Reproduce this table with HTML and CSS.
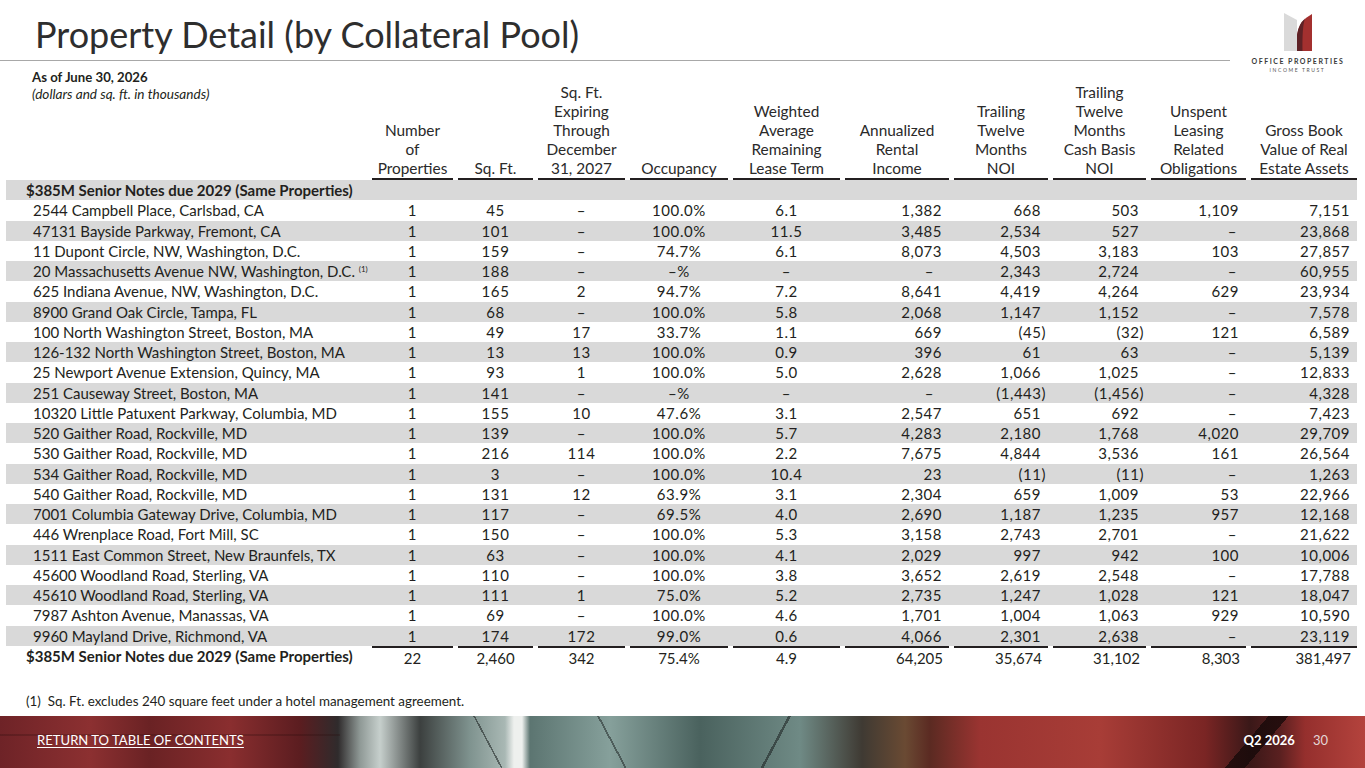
FILE: index.html
```html
<!DOCTYPE html>
<html lang="en">
<head>
<meta charset="utf-8">
<title>Property Detail (by Collateral Pool)</title>
<link rel="stylesheet" href="styles.css">
</head>
<body>
<div class="page">
  <header class="top">
    <div class="title-wrap">
      <h1 class="title">Property Detail (by Collateral Pool)</h1>
    </div>
    <div class="logo">
      <svg class="logo-mark" viewBox="0 0 28 38" width="28" height="38" aria-hidden="true">
        <path d="M0 0 L13 7 L13 38 L0 38 Z" fill="#dadada"/>
        <path d="M13 38 L13 22 Q14.5 8 28 1 L28 38 Z" fill="#a3302f"/>
        <path d="M13 38 L13 22 Q14.5 11 21 5.5 Q18 14 18.5 38 Z" fill="#5e2226"/>
      </svg>
      <div class="logo-name">OFFICE PROPERTIES</div>
      <div class="logo-sub">INCOME TRUST</div>
    </div>
  </header>

  <table class="grid">
    <colgroup>
      <col class="w-name"><col class="w-num"><col class="w-sq"><col class="w-exp"><col class="w-occ"><col class="w-walt">
      <col class="w-ari"><col class="w-noi"><col class="w-cash"><col class="w-uns"><col class="w-gross">
    </colgroup>
    <thead>
      <tr class="hrow">
        <th class="h-name">
          <div class="asof">As of June 30, 2026</div>
          <div class="units">(dollars and sq. ft. in thousands)</div>
        </th>
        <th><div class="hd">Number<br>of<br>Properties</div></th>
        <th><div class="hd">Sq. Ft.</div></th>
        <th><div class="hd">Sq. Ft.<br>Expiring<br>Through<br>December<br>31, 2027</div></th>
        <th><div class="hd">Occupancy</div></th>
        <th><div class="hd">Weighted<br>Average<br>Remaining<br>Lease Term</div></th>
        <th><div class="hd">Annualized<br>Rental<br>Income</div></th>
        <th><div class="hd">Trailing<br>Twelve<br>Months<br>NOI</div></th>
        <th><div class="hd">Trailing<br>Twelve<br>Months<br>Cash Basis<br>NOI</div></th>
        <th><div class="hd">Unspent<br>Leasing<br>Related<br>Obligations</div></th>
        <th><div class="hd">Gross Book<br>Value of Real<br>Estate Assets</div></th>
      </tr>
    </thead>
    <tbody>
      <tr class="group"><td class="g-name" colspan="11">$385M Senior Notes due 2029 (Same Properties)</td></tr>
      <tr><td class="nm">2544 Campbell Place, Carlsbad, CA</td><td class="c">1</td><td class="c">45</td><td class="c">–</td><td class="c">100.0%</td><td class="c">6.1</td><td class="r">1,382</td><td class="r">668</td><td class="r">503</td><td class="r">1,109</td><td class="r">7,151</td></tr>
      <tr><td class="nm">47131 Bayside Parkway, Fremont, CA</td><td class="c">1</td><td class="c">101</td><td class="c">–</td><td class="c">100.0%</td><td class="c">11.5</td><td class="r">3,485</td><td class="r">2,534</td><td class="r">527</td><td class="r"><span class="dash">–</span></td><td class="r">23,868</td></tr>
      <tr><td class="nm">11 Dupont Circle, NW, Washington, D.C.</td><td class="c">1</td><td class="c">159</td><td class="c">–</td><td class="c">74.7%</td><td class="c">6.1</td><td class="r">8,073</td><td class="r">4,503</td><td class="r">3,183</td><td class="r">103</td><td class="r">27,857</td></tr>
      <tr><td class="nm">20 Massachusetts Avenue NW, Washington, D.C. <sup class="fn">(1)</sup></td><td class="c">1</td><td class="c">188</td><td class="c">–</td><td class="c">–%</td><td class="c">–</td><td class="r"><span class="dash dash-w">–</span></td><td class="r">2,343</td><td class="r">2,724</td><td class="r"><span class="dash">–</span></td><td class="r">60,955</td></tr>
      <tr><td class="nm">625 Indiana Avenue, NW, Washington, D.C.</td><td class="c">1</td><td class="c">165</td><td class="c">2</td><td class="c">94.7%</td><td class="c">7.2</td><td class="r">8,641</td><td class="r">4,419</td><td class="r">4,264</td><td class="r">629</td><td class="r">23,934</td></tr>
      <tr><td class="nm">8900 Grand Oak Circle, Tampa, FL</td><td class="c">1</td><td class="c">68</td><td class="c">–</td><td class="c">100.0%</td><td class="c">5.8</td><td class="r">2,068</td><td class="r">1,147</td><td class="r">1,152</td><td class="r"><span class="dash">–</span></td><td class="r">7,578</td></tr>
      <tr><td class="nm">100 North Washington Street, Boston, MA</td><td class="c">1</td><td class="c">49</td><td class="c">17</td><td class="c">33.7%</td><td class="c">1.1</td><td class="r">669</td><td class="r">(45<span class="rp">)</span></td><td class="r">(32<span class="rp">)</span></td><td class="r">121</td><td class="r">6,589</td></tr>
      <tr><td class="nm">126-132 North Washington Street, Boston, MA</td><td class="c">1</td><td class="c">13</td><td class="c">13</td><td class="c">100.0%</td><td class="c">0.9</td><td class="r">396</td><td class="r">61</td><td class="r">63</td><td class="r"><span class="dash">–</span></td><td class="r">5,139</td></tr>
      <tr><td class="nm">25 Newport Avenue Extension, Quincy, MA</td><td class="c">1</td><td class="c">93</td><td class="c">1</td><td class="c">100.0%</td><td class="c">5.0</td><td class="r">2,628</td><td class="r">1,066</td><td class="r">1,025</td><td class="r"><span class="dash">–</span></td><td class="r">12,833</td></tr>
      <tr><td class="nm">251 Causeway Street, Boston, MA</td><td class="c">1</td><td class="c">141</td><td class="c">–</td><td class="c">–%</td><td class="c">–</td><td class="r"><span class="dash dash-w">–</span></td><td class="r">(1,443<span class="rp">)</span></td><td class="r">(1,456<span class="rp">)</span></td><td class="r"><span class="dash">–</span></td><td class="r">4,328</td></tr>
      <tr><td class="nm">10320 Little Patuxent Parkway, Columbia, MD</td><td class="c">1</td><td class="c">155</td><td class="c">10</td><td class="c">47.6%</td><td class="c">3.1</td><td class="r">2,547</td><td class="r">651</td><td class="r">692</td><td class="r"><span class="dash">–</span></td><td class="r">7,423</td></tr>
      <tr><td class="nm">520 Gaither Road, Rockville, MD</td><td class="c">1</td><td class="c">139</td><td class="c">–</td><td class="c">100.0%</td><td class="c">5.7</td><td class="r">4,283</td><td class="r">2,180</td><td class="r">1,768</td><td class="r">4,020</td><td class="r">29,709</td></tr>
      <tr><td class="nm">530 Gaither Road, Rockville, MD</td><td class="c">1</td><td class="c">216</td><td class="c">114</td><td class="c">100.0%</td><td class="c">2.2</td><td class="r">7,675</td><td class="r">4,844</td><td class="r">3,536</td><td class="r">161</td><td class="r">26,564</td></tr>
      <tr><td class="nm">534 Gaither Road, Rockville, MD</td><td class="c">1</td><td class="c">3</td><td class="c">–</td><td class="c">100.0%</td><td class="c">10.4</td><td class="r">23</td><td class="r">(11<span class="rp">)</span></td><td class="r">(11<span class="rp">)</span></td><td class="r"><span class="dash">–</span></td><td class="r">1,263</td></tr>
      <tr><td class="nm">540 Gaither Road, Rockville, MD</td><td class="c">1</td><td class="c">131</td><td class="c">12</td><td class="c">63.9%</td><td class="c">3.1</td><td class="r">2,304</td><td class="r">659</td><td class="r">1,009</td><td class="r">53</td><td class="r">22,966</td></tr>
      <tr><td class="nm">7001 Columbia Gateway Drive, Columbia, MD</td><td class="c">1</td><td class="c">117</td><td class="c">–</td><td class="c">69.5%</td><td class="c">4.0</td><td class="r">2,690</td><td class="r">1,187</td><td class="r">1,235</td><td class="r">957</td><td class="r">12,168</td></tr>
      <tr><td class="nm">446 Wrenplace Road, Fort Mill, SC</td><td class="c">1</td><td class="c">150</td><td class="c">–</td><td class="c">100.0%</td><td class="c">5.3</td><td class="r">3,158</td><td class="r">2,743</td><td class="r">2,701</td><td class="r"><span class="dash">–</span></td><td class="r">21,622</td></tr>
      <tr><td class="nm">1511 East Common Street, New Braunfels, TX</td><td class="c">1</td><td class="c">63</td><td class="c">–</td><td class="c">100.0%</td><td class="c">4.1</td><td class="r">2,029</td><td class="r">997</td><td class="r">942</td><td class="r">100</td><td class="r">10,006</td></tr>
      <tr><td class="nm">45600 Woodland Road, Sterling, VA</td><td class="c">1</td><td class="c">110</td><td class="c">–</td><td class="c">100.0%</td><td class="c">3.8</td><td class="r">3,652</td><td class="r">2,619</td><td class="r">2,548</td><td class="r"><span class="dash">–</span></td><td class="r">17,788</td></tr>
      <tr><td class="nm">45610 Woodland Road, Sterling, VA</td><td class="c">1</td><td class="c">111</td><td class="c">1</td><td class="c">75.0%</td><td class="c">5.2</td><td class="r">2,735</td><td class="r">1,247</td><td class="r">1,028</td><td class="r">121</td><td class="r">18,047</td></tr>
      <tr><td class="nm">7987 Ashton Avenue, Manassas, VA</td><td class="c">1</td><td class="c">69</td><td class="c">–</td><td class="c">100.0%</td><td class="c">4.6</td><td class="r">1,701</td><td class="r">1,004</td><td class="r">1,063</td><td class="r">929</td><td class="r">10,590</td></tr>
      <tr><td class="nm">9960 Mayland Drive, Richmond, VA</td><td class="c">1</td><td class="c">174</td><td class="c">172</td><td class="c">99.0%</td><td class="c">0.6</td><td class="r">4,066</td><td class="r">2,301</td><td class="r">2,638</td><td class="r"><span class="dash">–</span></td><td class="r">23,119</td></tr>
    </tbody>
    <tfoot>
      <tr class="total">
        <td class="t-name">$385M Senior Notes due 2029 (Same Properties)</td>
        <td class="tc"><div class="tv">22</div></td>
        <td class="tc"><div class="tv">2,460</div></td>
        <td class="tc"><div class="tv">342</div></td>
        <td class="tc"><div class="tv">75.4%</div></td>
        <td class="tc"><div class="tv">4.9</div></td>
        <td class="tr"><div class="tv">64,205</div></td>
        <td class="tr"><div class="tv">35,674</div></td>
        <td class="tr"><div class="tv">31,102</div></td>
        <td class="tr"><div class="tv">8,303</div></td>
        <td class="tr"><div class="tv">381,497</div></td>
      </tr>
    </tfoot>
  </table>

  <p class="footnote">(1)&nbsp; Sq. Ft. excludes 240 square feet under a hotel management agreement.</p>

  <footer class="foot">
    <a class="toc" href="#">RETURN TO TABLE OF CONTENTS</a>
    <div class="pg"><span class="q">Q2 2026</span><span class="num">30</span></div>
  </footer>
</div>
</body>
</html>
```

FILE: styles.css
```css
* { box-sizing: border-box; }

html, body {
  margin: 0;
  padding: 0;
  background: #ffffff;
}

body {
  font-family: Lato, "Open Sans", "Liberation Sans", sans-serif;
  color: #231f20;
}

.page {
  width: 1365px;
  height: 768px;
  display: flex;
  flex-direction: column;
  overflow: hidden;
}

/* ---------- header ---------- */
.top {
  display: flex;
  height: 61px;
  flex: none;
}

.title-wrap {
  flex: 1;
  padding-left: 35px;
  border-bottom: 1px solid #a8a8a8;
}

.title {
  margin: 0;
  padding-top: 11px;
  font-size: 36px;
  line-height: 46px;
  font-weight: 400;
  color: #2e2e2e;
}

.logo {
  width: 135px;
  display: flex;
  flex-direction: column;
  align-items: center;
  padding-top: 13px;
  position: relative;
  z-index: 1;
}

.logo > * { flex: none; }

.logo-mark {
  display: block;
}

.logo-name {
  margin-top: 6px;
  font-size: 7px;
  line-height: 9px;
  font-weight: 700;
  letter-spacing: 1.5px;
  color: #3a3a3a;
  white-space: nowrap;
  padding-left: 1px;
}

.logo-sub {
  margin-top: 1px;
  font-size: 5px;
  line-height: 7px;
  letter-spacing: 1.6px;
  color: #555;
  white-space: nowrap;
}

/* ---------- table ---------- */
.grid {
  margin: 8px 0 0 6px;
  width: 1351px;
  border-collapse: collapse;
  table-layout: fixed;
  font-size: 15px;
  flex: none;
}

.w-name { width: 361px; }
.w-num { width: 86px; }
.w-sq { width: 80px; }
.w-exp { width: 92px; }
.w-occ { width: 103px; }
.w-walt { width: 112px; }
.w-ari { width: 109px; }
.w-noi { width: 99px; }
.w-cash { width: 98px; }
.w-uns { width: 100px; }
.w-gross { width: 111px; }

.hrow th {
  height: 111px;
  padding: 0 0 0 5px;
  vertical-align: bottom;
  font-weight: 400;
}

.hrow th.h-name {
  vertical-align: top;
  text-align: left;
  padding: 0 0 0 26px;
}

.asof {
  font-weight: 700;
  font-size: 13.2px;
  line-height: 17px;
}

.units {
  font-style: italic;
  font-size: 13.6px;
  line-height: 17px;
}

.hd {
  text-align: center;
  line-height: 19px;
  border-bottom: 2px solid #231f20;
  color: #2a2a2a;
  white-space: nowrap;
  font-size: 15.4px;
}

.grid td {
  padding: 0;
  height: 20.25px;
  line-height: 20px;
  white-space: nowrap;
}

.group td {
  background: #d9d9d9;
  font-weight: 700;
  padding-left: 20px;
}

tbody tr:nth-child(odd):not(.group) td {
  background: #d9d9d9;
}

.nm { padding-left: 27px !important; }

.c {
  text-align: center;
  padding-left: 5px !important;
  letter-spacing: 0.6px;
}

.r {
  text-align: right;
  padding-right: 7px !important;
  letter-spacing: 0.5px;
}

.rp { margin-right: -5px; }

.dash { margin-right: 2px; }
.dash-w { margin-right: 8px; }

.fn {
  font-size: 8px;
  line-height: 0;
  vertical-align: 0;
  position: relative;
  top: -5px;
}

/* totals */
.total td {
  height: 23px;
  padding: 0;
  vertical-align: top;
}

.t-name {
  font-weight: 700;
  padding-left: 20px !important;
  line-height: 23px;
}

.total .tc, .total .tr { padding-left: 5px; }

.tv {
  border-top: 2px solid #231f20;
  line-height: 21px;
}

.tc .tv { text-align: center; }
.tr .tv { text-align: right; padding-right: 6px; }

/* footnote */
.footnote {
  margin: 24px 0 0 26px;
  font-size: 13.4px;
  line-height: 16px;
  color: #231f20;
}

/* ---------- footer band ---------- */
.foot {
  margin-top: auto;
  height: 52px;
  flex: none;
  display: flex;
  align-items: center;
  justify-content: space-between;
  padding: 0 37px 4px 37px;
  background:
    linear-gradient(62deg, rgba(0,0,0,0) 0 48%, rgba(25,30,30,0.55) 48% 49.2%, rgba(0,0,0,0) 49.2%) 430px 0 / 120px 52px no-repeat,
    linear-gradient(118deg, rgba(0,0,0,0) 0 47%, rgba(25,30,30,0.55) 47% 48.5%, rgba(0,0,0,0) 48.5%) 700px 0 / 160px 52px no-repeat,
    linear-gradient(62deg, rgba(0,0,0,0) 0 47%, rgba(25,30,30,0.5) 47% 48.5%, rgba(0,0,0,0) 48.5%) 560px 0 / 110px 52px no-repeat,
    linear-gradient(130deg, rgba(0,0,0,0) 0 40%, rgba(20,8,8,0.75) 40% 55%, rgba(0,0,0,0) 55%) 1215px 0 / 90px 52px no-repeat,
    linear-gradient(180deg, rgba(0,0,0,0) 0 35%, rgba(40,10,10,0.25) 35% 38%, rgba(0,0,0,0) 38%) 0 0 / 340px 52px no-repeat,
    linear-gradient(90deg,
      #6e2327 0, #8c3031 90px, #6a2224 150px, #8a2e2f 230px, #5b1d20 300px,
      #2f2b2c 338px, #8f9996 360px, #c6cfcc 380px, #3c403f 420px,
      #7f938f 470px, #a9b8b4 505px, #eef0ee 514px, #eef0ee 522px,
      #5c7571 530px, #86a09b 610px, #4a625e 700px, #6f8a85 800px,
      #3f3a33 862px, #6a4a33 905px, #5b2a22 930px, #9a3431 980px,
      #a83d37 1100px, #7a2524 1205px, #3a1818 1250px, #5a2020 1280px,
      #952f2d 1305px, #b4433d 1365px);
}

.toc {
  color: #ffffff;
  font-size: 13.1px;
  text-decoration: underline;
  text-underline-offset: 2px;
}

.pg {
  display: flex;
  gap: 18px;
  color: #ffffff;
  font-size: 13px;
}

.q { font-weight: 700; }
.num { color: #e4d6d6; }
```
